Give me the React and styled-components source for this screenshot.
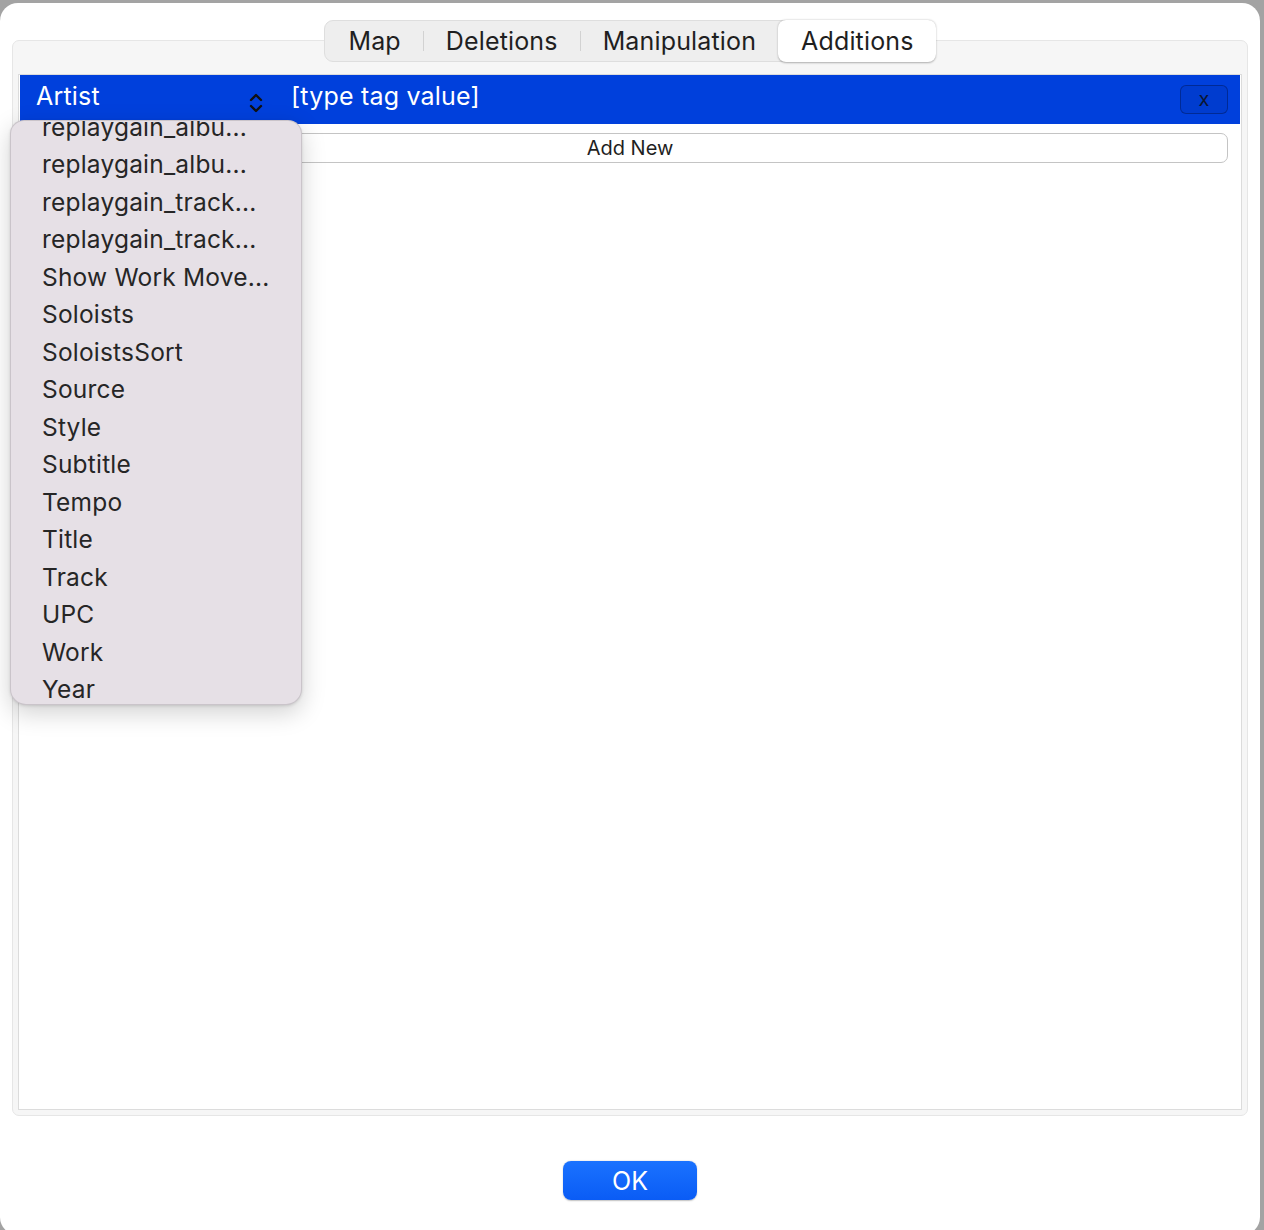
import React from 'react';
import styled, { createGlobalStyle } from 'styled-components';

const tabs = ['Map', 'Deletions', 'Manipulation', 'Additions'];
const tags = [
  'replaygain_albu...',
  'replaygain_albu...',
  'replaygain_track...',
  'replaygain_track...',
  'Show Work Move...',
  'Soloists',
  'SoloistsSort',
  'Source',
  'Style',
  'Subtitle',
  'Tempo',
  'Title',
  'Track',
  'UPC',
  'Work',
  'Year',
];

const Chevrons = () => (
  <svg width="16" height="24" viewBox="0 0 16 24" fill="none" stroke="#111" strokeWidth="2.4" strokeLinecap="round" strokeLinejoin="round">
    <path d="M3 9 L8 4 L13 9" />
    <path d="M3 15 L8 20 L13 15" />
  </svg>
);

const App = () => {
  return (
    <>
      <Global />
      <Window>
        <TabBar>
          {tabs.map((t, i) => (
            <Tab key={t} $active={t === 'Additions'} $sep={i > 0 && i < 3}>
              {t}
            </Tab>
          ))}
        </TabBar>
        <GroupBox>
          <Panel>
            <TagRow>
              <TagSelect>
                <span>Artist</span>
                <Chevrons />
              </TagSelect>
              <TagValue>[type tag value]</TagValue>
              <RemoveButton>x</RemoveButton>
            </TagRow>
            <AddButton>Add New</AddButton>
          </Panel>
        </GroupBox>
        <Footer>
          <OkButton>OK</OkButton>
        </Footer>
        <Menu>
          <MenuList>
            {tags.map((t, i) => (
              <MenuItem key={i}>{t}</MenuItem>
            ))}
          </MenuList>
        </Menu>
      </Window>
    </>
  );
};

const Global = createGlobalStyle`
  html, body {
    margin: 0;
    padding: 0;
    background: #a3a3a3;
  }
  body {
    font-family: Inter, "Liberation Sans", sans-serif;
    overflow: hidden;
  }
`;

const Window = styled.div`
  position: relative;
  margin-top: 3px;
  width: 1260px;
  height: 1232px;
  background: #ffffff;
  border-radius: 18px;
  display: flex;
  flex-direction: column;
  box-sizing: border-box;
  padding-top: 17px;
`;

const TabBar = styled.div`
  position: relative;
  z-index: 2;
  align-self: center;
  display: flex;
  height: 42px;
  box-sizing: border-box;
  background: #eeeeee;
  border: 1px solid #dedede;
  border-radius: 9px;
  margin-bottom: -22px;
`;

const Tab = styled.div`
  position: relative;
  display: flex;
  align-items: center;
  padding: 0 22px 0 23px;
  font-size: 25px;
  color: #1f1f1f;
  letter-spacing: 0.15px;
  ${p => p.$active && `
    background: #ffffff;
    border-radius: 8px;
    margin: -1px -1px -1px 0;
    box-shadow: 0 0.5px 2px rgba(0,0,0,0.3);
  `}
  ${p => p.$sep && `
    &::before {
      content: '';
      position: absolute;
      left: 0;
      top: 10px;
      bottom: 10px;
      width: 1px;
      background: #d2d2d2;
    }
  `}
`;

const GroupBox = styled.div`
  margin: 0 12px;
  height: 1076px;
  box-sizing: border-box;
  background: #f6f6f6;
  border: 1px solid #e6e6e6;
  border-radius: 7px;
  padding: 33px 5px 5px 5px;
  display: flex;
`;

const Panel = styled.div`
  flex: 1;
  background: #ffffff;
  border: 1px solid #dcdcdc;
  padding: 0 1px;
  display: flex;
  flex-direction: column;
`;

const TagRow = styled.div`
  height: 49px;
  background: #0040dc;
  display: flex;
  align-items: center;
  padding: 0 12px 0 16px;
  color: #ffffff;
  font-size: 25px;
  letter-spacing: 0.2px;
`;

const TagSelect = styled.div`
  width: 239px;
  display: flex;
  align-items: center;
  justify-content: space-between;
  margin-top: -8px;
  padding-right: 11px;
  box-sizing: border-box;
  svg {
    margin-top: 14px;
  }
`;

const TagValue = styled.div`
  flex: 1;
  margin-left: 16px;
  margin-top: -8px;
`;

const RemoveButton = styled.div`
  width: 48px;
  height: 29px;
  box-sizing: border-box;
  border: 1px solid rgba(0, 20, 80, 0.45);
  background: #003ccf;
  border-radius: 6px;
  color: #0b1633;
  font-size: 20px;
  display: flex;
  align-items: center;
  justify-content: center;
  padding-bottom: 2px;
`;

const AddButton = styled.div`
  margin: 9px 12px 0 12px;
  height: 30px;
  box-sizing: border-box;
  border: 1.5px solid #c4c4c4;
  border-radius: 7px;
  background: #ffffff;
  display: flex;
  align-items: center;
  justify-content: center;
  font-size: 20px;
  color: #1f1f1f;
`;

const Footer = styled.div`
  display: flex;
  justify-content: center;
  padding-top: 45px;
`;

const OkButton = styled.div`
  width: 134px;
  height: 39px;
  border-radius: 8px;
  background: linear-gradient(#1a72ff, #0a5cf5);
  color: #ffffff;
  font-size: 25px;
  display: flex;
  align-items: center;
  justify-content: center;
  box-shadow: 0 0.5px 1.5px rgba(0, 0, 0, 0.25);
`;

const Menu = styled.div`
  position: absolute;
  z-index: 5;
  left: 10px;
  top: 117px;
  width: 290px;
  height: 583px;
  overflow: hidden;
  background: #e6e0e6;
  border-radius: 14px 14px 16px 16px;
  border: 0.5px solid rgba(0, 0, 0, 0.12);
  box-shadow: 0 8px 24px rgba(0, 0, 0, 0.18), 0 1px 3px rgba(0, 0, 0, 0.12);
`;

const MenuList = styled.div`
  margin-top: -13px;
  display: flex;
  flex-direction: column;
`;

const MenuItem = styled.div`
  height: 37.5px;
  display: flex;
  align-items: center;
  padding-left: 31px;
  font-size: 24.5px;
  letter-spacing: 0.2px;
  color: #262626;
  white-space: nowrap;
`;

export default App;
